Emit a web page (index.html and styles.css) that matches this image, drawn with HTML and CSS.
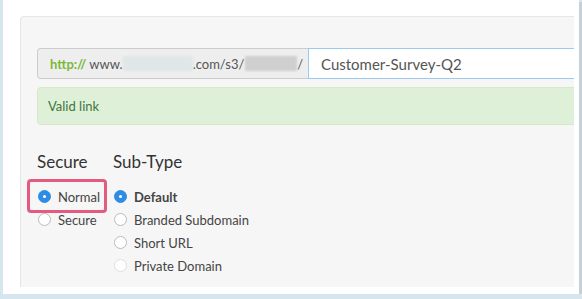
FILE: index.html
```html
<!DOCTYPE html>
<html lang="en">
<head>
  <meta charset="UTF-8">
  <title>Link Settings</title>
  <link rel="stylesheet" href="styles.css">
</head>
<body>
  <div class="frame">
    <div class="panel">
      <div class="panel-body">
        <div class="url-group">
          <div class="url-addon">
            <span class="proto">http://</span>
            <span class="host">www.</span><span class="blur blur-light"></span><span class="host">.com/s3/</span><span class="blur blur-dark"></span><span class="host">/</span>
          </div>
          <div class="url-input">Customer-Survey-Q2</div>
        </div>
        <div class="alert-ok">Valid link</div>
        <div class="options">
          <div class="opt-col col-secure">
            <h3>Secure</h3>
            <div class="radio-row highlighted"><span class="radio checked"></span>Normal</div>
            <div class="radio-row"><span class="radio"></span>Secure</div>
          </div>
          <div class="opt-col">
            <h3>Sub-Type</h3>
            <div class="radio-row bold"><span class="radio checked"></span>Default</div>
            <div class="radio-row"><span class="radio"></span>Branded Subdomain</div>
            <div class="radio-row"><span class="radio"></span>Short URL</div>
            <div class="radio-row"><span class="radio disabled"></span>Private Domain</div>
          </div>
        </div>
      </div>
    </div>
  </div>
</body>
</html>
```

FILE: styles.css
```css
body { margin: 0; background: #d6e6ee; font-family: Lato, "Open Sans", sans-serif; color: #444; }
.frame { margin-left: 3px; width: 559px; height: 278px; padding: 16px 0 0 17px; background: #fff;
         box-shadow: 3px 2px 0 #c4d1d8, 0 5px 0 #cfe0ea; }
.panel { width: 553px; height: 270px; background: #f6f6f6; border-top: 1px solid #e6e6e6; border-left: 1px solid #e6e6e6;
         border-top-left-radius: 4px; overflow: hidden; }
.panel-body { width: 560px; padding: 31px 0 0 16px; }
.url-group { display: flex; height: 31px; }
.url-addon { width: 258px; flex-shrink: 0; display: flex; align-items: center; padding-left: 12px; background: #eee;
             border: 1px solid #ccc; border-right: 0; border-radius: 4px 0 0 4px; font-size: 13px; color: #555; }
.proto { color: #7cb83a; font-weight: bold; margin-right: 3px; }
.blur { display: inline-block; height: 15px; filter: blur(1px); }
.blur-light { width: 70px; background: #e1e7e7; }
.blur-dark { width: 52px; margin-left: 1px; background: #cfcfcf; }
.url-input { flex: 1; display: flex; align-items: center; padding-left: 12px; background: #fff; border: 1px solid #9ccaee;
             font-size: 15px; color: #555; }
.alert-ok { margin-top: 8px; height: 36px; display: flex; align-items: center; padding-left: 10px; background: #dff0d8;
            border: 1px solid #d6e9c6; border-radius: 4px; font-size: 13px; color: #3c763d; }
.options { display: flex; margin-top: 27px; }
.opt-col { display: flex; flex-direction: column; }
.col-secure { width: 76px; }
.opt-col h3 { margin: 0 0 13px; font-size: 17px; font-weight: normal; line-height: 20px; color: #333; }
.radio-row { position: relative; display: flex; align-items: center; height: 23px; font-size: 13px; color: #444; }
.radio-row.bold { font-weight: bold; }
.highlighted::after { content: ""; position: absolute; left: -10px; top: -6px; width: 74px; height: 28px;
                      border: 3px solid #e45b80; border-radius: 4px; }
.radio { width: 11px; height: 11px; margin: 0 7px 0 1px; border-radius: 50%; border: 1px solid #bbb; background: #fff; }
.radio.checked { background: #2d8de6; border-color: #2d8de6; position: relative; }
.radio.checked::after { content: ""; position: absolute; left: 4px; top: 4px; width: 3px; height: 3px; border-radius: 50%; background: #fff; }
.radio.disabled { border-color: #dedede; }
```
